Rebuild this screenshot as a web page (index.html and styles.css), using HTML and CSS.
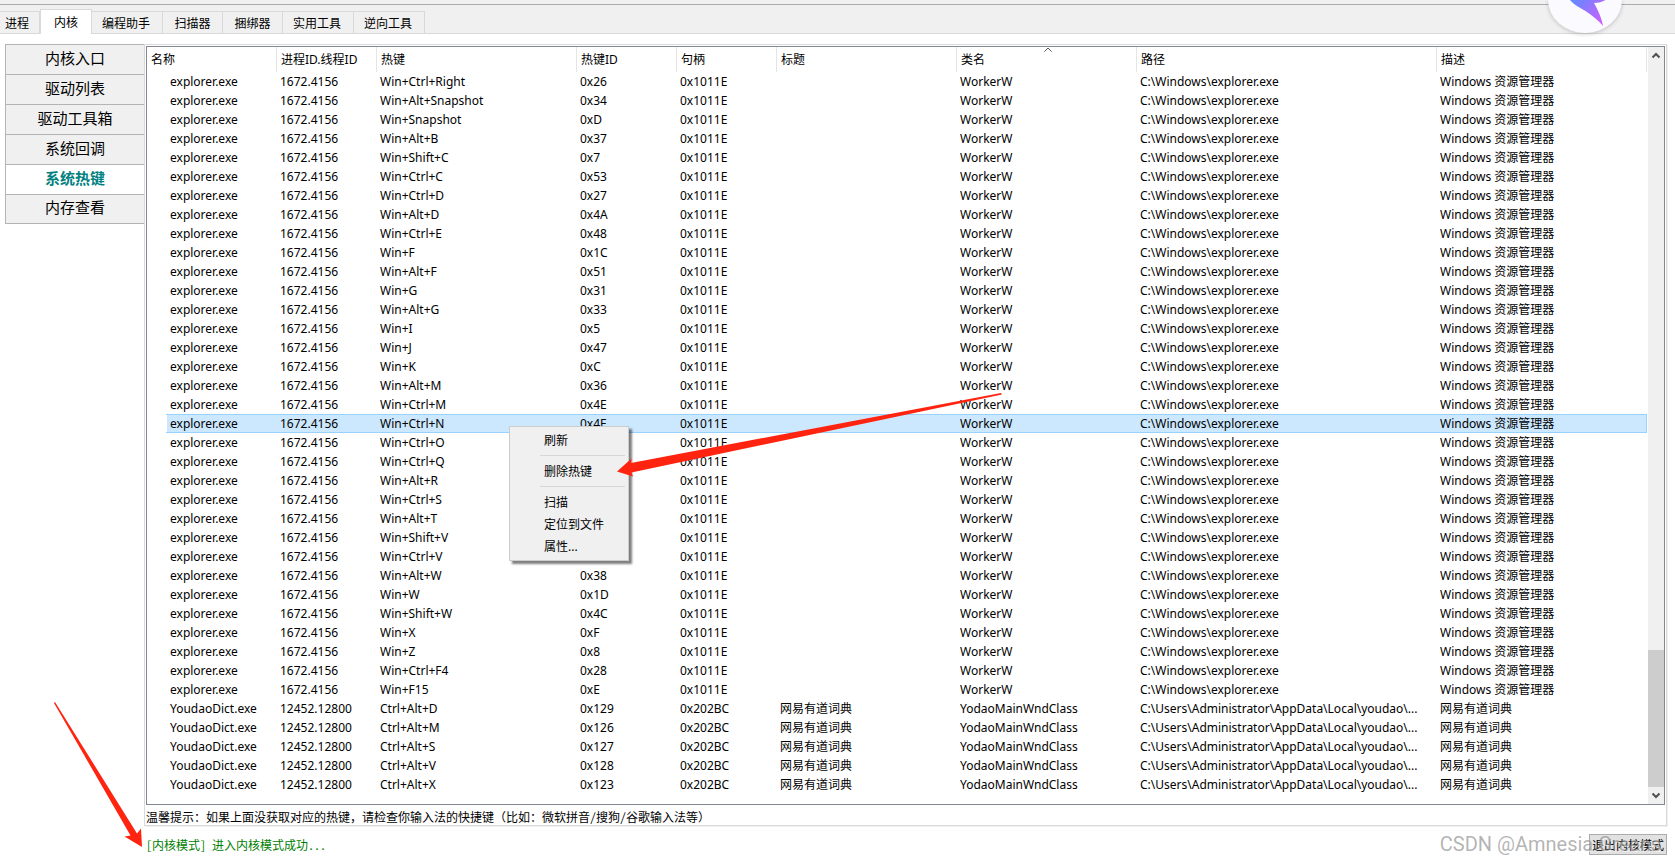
FILE: index.html
```html
<!DOCTYPE html>
<html lang="zh-CN">
<head>
<meta charset="utf-8">
<title>系统热键</title>
<link rel="stylesheet" href="styles.css">
</head>
<body>
<div class="app">
  <nav class="tabs">
    <button class="tab tab-first">进程</button>
    <button class="tab tab-active">内核</button>
    <button class="tab tab-wide">编程助手</button>
    <button class="tab">扫描器</button>
    <button class="tab">捆绑器</button>
    <button class="tab tab-wide">实用工具</button>
    <button class="tab tab-wide">逆向工具</button>
  </nav>
  <main class="main">
    <nav class="side">
      <button class="side-item">内核入口</button>
      <button class="side-item">驱动列表</button>
      <button class="side-item">驱动工具箱</button>
      <button class="side-item">系统回调</button>
      <button class="side-item side-active">系统热键</button>
      <button class="side-item">内存查看</button>
    </nav>
    <section class="panel">
      <div class="list">
        <table class="grid">
          <colgroup>
            <col class="w130"><col class="w100"><col class="w200"><col class="w100"><col class="w100"><col class="w180"><col class="w180"><col class="w300"><col>
          </colgroup>
          <thead>
            <tr><th>名称</th><th>进程ID.线程ID</th><th>热键</th><th>热键ID</th><th>句柄</th><th>标题</th><th class="sorted">类名<svg class="sort" viewBox="0 0 8 5"><path d="M0.5 4.5L4 1L7.5 4.5"/></svg></th><th>路径</th><th>描述</th></tr>
          </thead>
          <tbody id="rows"></tbody>
        </table>
        <div class="scroll">
          <svg class="arrow" viewBox="0 0 16 17"><path d="M4.5 10.5L8 7L11.5 10.5"/></svg>
          <div class="track"><div class="thumb"></div></div>
          <svg class="arrow" viewBox="0 0 16 17"><path d="M4.5 6.5L8 10L11.5 6.5"/></svg>
        </div>
      </div>
      <p class="hint">温馨提示：如果上面没获取对应的热键，请检查你输入法的快捷键（比如：微软拼音/搜狗/谷歌输入法等）</p>
    </section>
  </main>
  <footer class="status">
    <span class="message">[内核模式] 进入内核模式成功...</span>
    <button class="exit">退出内核模式</button>
    <span class="mark">CSDN @Amnesia Greens</span>
  </footer>
</div>

<div class="menu">
  <button class="menu-item">刷新</button>
  <hr class="menu-line">
  <button class="menu-item">删除热键</button>
  <hr class="menu-line">
  <button class="menu-item">扫描</button>
  <button class="menu-item">定位到文件</button>
  <button class="menu-item">属性...</button>
</div>

<svg class="pointer pointer-menu" viewBox="0 0 386 86">
  <path d="M385 1L15 71L15.500 66.500L1 79.500L17 84.500L15.500 80.500L386 2.500Z"/>
</svg>
<svg class="pointer pointer-status" viewBox="0 0 90 146">
  <path d="M1 0L0 1L76.500 133.500L70.500 134.500L88 145L87 126.500L83 131.500Z"/>
</svg>

<div class="badge">
  <svg class="bird" viewBox="0 0 74 74">
    <defs><linearGradient id="wing" gradientUnits="userSpaceOnUse" x1="24" y1="38" x2="56" y2="66"><stop offset="0" stop-color="#5b8cff"/><stop offset="1" stop-color="#d45cff"/></linearGradient></defs>
    <path fill="url(#wing)" d="M10 26C14 32 18 38 22 41C26 46 33 49 39 53C45 57 51 62 55 67C54 60 50 51 46 44C50 44 56 43 62 38L50 20Z"/>
  </svg>
</div>
<script src="script.js"></script>
</body>
</html>
```

FILE: styles.css
```css
* { box-sizing: border-box; }
body {
  margin: 0;
  background: #fff;
  color: #000;
  font: 12px/19px "Noto Sans", "Noto Sans CJK SC", sans-serif;
  position: relative;
  overflow-x: hidden;
}
button { margin: 0; padding: 0; font: inherit; color: inherit; border: 0; background: none; }
.app { display: flex; flex-direction: column; min-height: 100vh; }

.tabs {
  display: flex;
  align-items: flex-end;
  height: 34px;
  padding-top: 4px;
  background: linear-gradient(#f0f0f0 4px, #adadad 4px, #adadad 5px, #f0f0f0 5px);
  border-bottom: 1px solid #d9d9d9;
  font-family: "Noto Sans CJK SC", sans-serif;
}
.tab { width: 60px; height: 22px; border: 1px solid #d9d9d9; border-width: 1px 1px 0 0; }
.tab-first { width: 40px; padding-right: 5px; }
.tab-active { width: 52px; height: 25px; margin-bottom: -1px; padding-bottom: 1px; background: #fff; border-left-width: 1px; }
.tab-wide { width: 71px; padding-right: 2px; }

.main { flex: 1; display: flex; padding: 10px 8px 0 5px; }
.side { width: 139px; flex: none; display: flex; flex-direction: column; font: 15px/20px "Noto Sans CJK SC", sans-serif; }
.side-item { height: 30px; padding: 0 0 4px; background: #f0f0f0; border: 1px solid #b4b4b4; border-width: 1px 0 0 1px; }
.side-item:last-child { border-bottom-width: 1px; }
.side-active { background: #fff; color: #008080; font-weight: bold; }

.panel { flex: 1; min-width: 0; display: flex; flex-direction: column; border: 1px solid #d9d9d9; padding: 1px 1px 0; box-shadow: 1px 1px #f0f0f0; }
.list { flex: 1; display: flex; align-items: flex-start; border: 1px solid #828790; }
.grid { flex: 1; width: 100%; min-width: 0; table-layout: fixed; border-collapse: separate; border-spacing: 0; }
.w100 { width: 100px; }
.w130 { width: 130px; }
.w180 { width: 180px; }
.w200 { width: 200px; }
.w300 { width: 300px; }
th { position: relative; height: 25px; padding: 0 4px; text-align: left; font-weight: normal; border-right: 1px solid #e5e5e5; white-space: nowrap; }
.sort { position: absolute; top: 0; left: 87px; width: 8px; height: 5px; fill: none; stroke: #555; }
td { height: 19px; padding: 0 3px; line-height: 17px; white-space: nowrap; overflow: hidden; text-overflow: ellipsis; border: 0 solid #99d1ff; }
td:first-child { padding-left: 23px; }
.selected td { background: #cce8ff; border-width: 1px 0; }
.selected td:first-child { background: linear-gradient(90deg, #fff 20px, #cce8ff 20px); border-image: linear-gradient(90deg, #fff 20px, #99d1ff 20px) 1; border-width: 1px 0; }
.selected td:last-child { border-right-width: 1px; }
.scroll { width: 17px; align-self: stretch; display: flex; flex-direction: column; background: #f0f0f0; border-left: 1px solid #fff; }
.arrow { height: 17px; flex: none; fill: none; stroke: #505050; stroke-width: 2; }
.track { flex: 1; display: flex; flex-direction: column; justify-content: flex-end; }
.thumb { height: 19%; background: #cdcdcd; }
.hint { margin: 0; height: 20px; line-height: 24px; font-family: "Noto Sans Mono CJK SC", "Noto Sans CJK SC", sans-serif; }

.status { position: relative; display: flex; align-items: center; justify-content: space-between; height: 37px; padding: 0 8px 0 146px; font-family: "Noto Sans Mono CJK SC", "Noto Sans CJK SC", sans-serif; }
.message { color: #008000; }
.exit { width: 78px; height: 21px; line-height: 19px; background: #e1e1e1; border: 1px solid #adadad; }
.mark { position: absolute; right: 14px; top: 6px; font: 20px/24px Roboto, sans-serif; color: rgba(130, 130, 130, 0.6); text-shadow: 1px 1px rgba(255, 255, 255, 0.5); pointer-events: none; }

.menu { position: absolute; left: 509px; top: 426px; width: 120px; padding: 2px 3px 3px; display: flex; flex-direction: column; background: #f0f0f0; border: 1px solid #ccc; box-shadow: 3px 3px 2px rgba(0, 0, 0, 0.5); }
.menu-item { height: 22px; padding-left: 31px; text-align: left; }
.menu-line { width: 85px; height: 1px; margin: 4px 0 4px 27px; border: 0; background: #d7d7d7; }

.pointer { position: absolute; fill: #ff2410; pointer-events: none; }
.pointer-menu { left: 616px; top: 392px; width: 386px; height: 86px; }
.pointer-status { left: 54px; top: 702px; width: 90px; height: 146px; }

.badge { position: absolute; top: 0; right: 53px; width: 74px; height: 33px; display: flex; align-items: flex-end; border-radius: 0 0 37px 37px / 0 0 33px 33px; background: #fafaff; box-shadow: 0 1px 4px rgba(0, 0, 0, 0.2); overflow: hidden; }
.bird { width: 74px; height: 74px; flex: none; }
```

FILE: script.js
```js
const explorerKeys = [
  ["Win+Ctrl+Right", "0x26"], ["Win+Alt+Snapshot", "0x34"], ["Win+Snapshot", "0xD"],
  ["Win+Alt+B", "0x37"], ["Win+Shift+C", "0x7"], ["Win+Ctrl+C", "0x53"],
  ["Win+Ctrl+D", "0x27"], ["Win+Alt+D", "0x4A"], ["Win+Ctrl+E", "0x48"],
  ["Win+F", "0x1C"], ["Win+Alt+F", "0x51"], ["Win+G", "0x31"],
  ["Win+Alt+G", "0x33"], ["Win+I", "0x5"], ["Win+J", "0x47"],
  ["Win+K", "0xC"], ["Win+Alt+M", "0x36"], ["Win+Ctrl+M", "0x4E"],
  ["Win+Ctrl+N", "0x4F"], ["Win+Ctrl+O", ""], ["Win+Ctrl+Q", ""],
  ["Win+Alt+R", ""], ["Win+Ctrl+S", ""], ["Win+Alt+T", ""],
  ["Win+Shift+V", ""], ["Win+Ctrl+V", "0x3E"], ["Win+Alt+W", "0x38"],
  ["Win+W", "0x1D"], ["Win+Shift+W", "0x4C"], ["Win+X", "0xF"],
  ["Win+Z", "0x8"], ["Win+Ctrl+F4", "0x28"], ["Win+F15", "0xE"]
];
const youdaoKeys = [
  ["Ctrl+Alt+D", "0x129"], ["Ctrl+Alt+M", "0x126"], ["Ctrl+Alt+S", "0x127"],
  ["Ctrl+Alt+V", "0x128"], ["Ctrl+Alt+X", "0x123"]
];
const rows = explorerKeys.map(([key, id]) =>
  ["explorer.exe", "1672.4156", key, id, "0x1011E", "", "WorkerW", "C:\\Windows\\explorer.exe", "Windows 资源管理器"]
).concat(youdaoKeys.map(([key, id]) =>
  ["YoudaoDict.exe", "12452.12800", key, id, "0x202BC", "网易有道词典", "YodaoMainWndClass", "C:\\Users\\Administrator\\AppData\\Local\\youdao\\...", "网易有道词典"]
));
const body = document.getElementById("rows");
rows.forEach((cells) => {
  const tr = body.insertRow();
  if (cells[2] === "Win+Ctrl+N") tr.className = "selected";
  cells.forEach((text) => { tr.insertCell().textContent = text; });
});
```
